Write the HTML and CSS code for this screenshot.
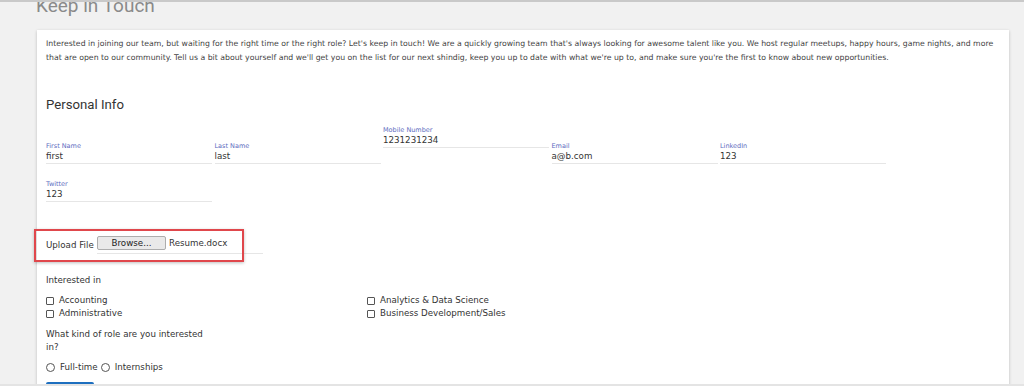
FILE: index.html
```html
<!DOCTYPE html>
<html lang="en">

<head>
    <meta charset="UTF-8">
    <meta name="viewport" content="width=device-width, initial-scale=1.0">
    <title>Keep in Touch</title>

    <link rel="stylesheet" href="styles.css">
</head>

<body>
    <h1 class="page-title">Keep in Touch</h1>

    <!-- CARD -->
    <div class="card">
        <p class="intro">
            Interested in joining our team, but waiting for the right time or the right role? Let's keep in touch! We are a quickly growing team that's always looking for awesome talent like you. We host regular meetups, happy hours, game nights, and more that are open to our community. Tell us a bit about yourself and we'll get you on the list for our next shindig, keep you up to date with what we're up to, and make sure you're the first to know about new opportunities.
        </p>

        <h2 class="section-title">Personal Info</h2>

        <!-- FIELDS -->
        <div class="fields">
            <div class="field">
                <label class="field-label">First Name</label>
                <div class="field-value">first</div>
            </div>
            <div class="field">
                <label class="field-label">Last Name</label>
                <div class="field-value">last</div>
            </div>
            <div class="field field-raised">
                <label class="field-label">Mobile Number</label>
                <div class="field-value">1231231234</div>
            </div>
            <div class="field">
                <label class="field-label">Email</label>
                <div class="field-value">a@b.com</div>
            </div>
            <div class="field">
                <label class="field-label">LinkedIn</label>
                <div class="field-value">123</div>
            </div>
            <div class="field">
                <label class="field-label">Twitter</label>
                <div class="field-value">123</div>
            </div>
        </div>

        <!-- UPLOAD -->
        <div class="upload-row">
            <span class="upload-label">Upload File</span>
            <div class="upload-input">
                <button class="browse-btn">Browse...</button>
                <span class="file-name">Resume.docx</span>
            </div>
            <div class="highlight"></div>
        </div>

        <!-- INTERESTS -->
        <p class="question">Interested in</p>
        <div class="check-grid">
            <label class="option"><input type="checkbox"> Accounting</label>
            <label class="option"><input type="checkbox"> Analytics &amp; Data Science</label>
            <label class="option"><input type="checkbox"> Administrative</label>
            <label class="option"><input type="checkbox"> Business Development/Sales</label>
        </div>

        <p class="question question-narrow">What kind of role are you interested in?</p>
        <div class="radio-row">
            <label class="option"><input type="radio" name="role"> Full-time</label>
            <label class="option"><input type="radio" name="role"> Internships</label>
        </div>

        <button class="submit-btn"></button>
    </div>
</body>

</html>
```

FILE: styles.css
```css
/* RESET */
* {
    margin: 0;
    padding: 0;
    box-sizing: border-box;
}

/* GERAL */
body {
    background-color: #f1f1f1;
    border-top: 2px solid #c9c9c9;
    font-family: "DejaVu Sans", Verdana, sans-serif;
    color: #333;
    overflow: hidden;
    height: 386px;
}

body::after {
    content: "";
    position: fixed;
    left: 0;
    right: 0;
    bottom: 0;
    height: 2px;
    background-color: #e4e4e4;
}

.page-title {
    margin: -10px 0 0 36px;
    font-family: Roboto, "Liberation Sans", sans-serif;
    font-weight: 400;
    font-size: 19px;
    line-height: 28px;
    color: #8a8a8a;
}

/* CARD */
.card {
    width: 972px;
    margin: 10px 0 0 37px;
    padding: 7px 9px 0 9px;
    background-color: #fff;
    box-shadow: 0 1px 3px rgba(0, 0, 0, 0.22);
    min-height: 400px;
}

.intro {
    font-size: 7.75px;
    line-height: 14px;
    color: #444;
}

.section-title {
    margin-top: 32px;
    font-family: Roboto, "Liberation Sans", sans-serif;
    font-weight: 400;
    font-size: 13.2px;
    line-height: 16px;
    color: #333;
}

/* FIELDS */
.fields {
    display: flex;
    flex-wrap: wrap;
    align-items: flex-start;
    width: 850px;
    margin-top: 13px;
}

.field {
    width: 166px;
    margin-right: 2.5px;
    padding-top: 16px;
    border-bottom: 1px solid #e6e6e6;
    padding-bottom: 1px;
}

.field-raised {
    padding-top: 0;
}

.field-label {
    display: block;
    font-size: 6.5px;
    line-height: 8px;
    color: #5c6bc0;
}

.field-value {
    font-size: 8.7px;
    line-height: 12px;
    color: #333;
}

/* UPLOAD */
.upload-row {
    position: relative;
    display: flex;
    align-items: center;
    margin-top: 34px;
    font-size: 8.7px;
    color: #333;
}

.upload-label {
    width: 51px;
}

.upload-input {
    display: flex;
    align-items: center;
    width: 166px;
    padding-bottom: 3px;
    border-bottom: 1px solid #e6e6e6;
}

.browse-btn {
    width: 69px;
    height: 14px;
    margin-right: 3px;
    border: 1px solid #adadad;
    border-radius: 2px;
    background-color: #e9e9e9;
    font-family: "DejaVu Sans", Verdana, sans-serif;
    font-size: 8.7px;
    color: #222;
}

.highlight {
    position: absolute;
    left: -12px;
    top: -7px;
    width: 210px;
    height: 33px;
    border: 2px solid #e0474c;
    box-shadow: 0 1px 3px rgba(0, 0, 0, 0.25);
}

/* OPTIONS */
.question {
    margin-top: 19px;
    font-size: 8.7px;
    line-height: 14px;
    color: #333;
}

.question-narrow {
    width: 166px;
    margin-top: 8px;
    line-height: 13px;
}

.check-grid {
    display: grid;
    grid-template-columns: 321px 321px;
    margin-top: 7px;
}

.option {
    display: flex;
    align-items: center;
    gap: 5px;
    font-size: 8.7px;
    line-height: 13px;
    color: #333;
}

.option input {
    appearance: none;
    width: 8px;
    height: 8px;
    border: 1px solid #555;
    border-radius: 1px;
    background-color: #fff;
}

.option input[type="radio"] {
    width: 9px;
    height: 9px;
    border-radius: 50%;
}

.radio-row {
    display: flex;
    gap: 3px;
    margin-top: 7px;
}

.submit-btn {
    display: block;
    width: 48px;
    height: 24px;
    margin-top: 8px;
    border: none;
    border-radius: 2px;
    background-color: #1e6fbf;
}
```
